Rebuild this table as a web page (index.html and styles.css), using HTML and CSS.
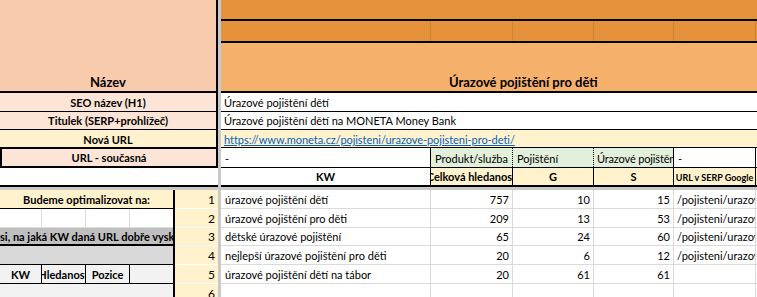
FILE: index.html
```html
<!DOCTYPE html>
<html lang="cs">
<head>
<meta charset="utf-8">
<title>Úrazové pojištění pro děti</title>
<link rel="stylesheet" href="styles.css">
</head>
<body>
<div class="sheet">
  <div class="pane tl">
    <div class="tl-name"><span>Název</span></div>
    <div class="tl-row seo">SEO název (H1)</div>
    <div class="tl-row tit">Titulek (SERP+prohlížeč)</div>
    <div class="tl-row nova">Nová URL</div>
    <div class="tl-row cur">URL - současná</div>
    <div class="tl-row empty"></div>
  </div>

  <div class="pane tr">
    <div class="o1"></div>
    <div class="o2 cols"><div></div><div></div><div></div><div></div><div></div><div></div></div>
    <div class="o3"><span>Úrazové pojištění pro děti</span></div>
    <div class="tr-row seo-v">Úrazové pojištění dětí</div>
    <div class="tr-row tit-v">Úrazové pojištění dětí na MONETA Money Bank</div>
    <div class="tr-row nova-v"><a class="link" href="#">https://www.moneta.cz/pojisteni/urazove-pojisteni-pro-deti/</a></div>
    <div class="cols r4">
      <div class="c">-</div>
      <div class="c green solid">Produkt/služba</div>
      <div class="c green dotted">Pojištění</div>
      <div class="c green dotted tight">Úrazové pojištění</div>
      <div class="c solid">-</div>
      <div class="c solid"></div>
    </div>
    <div class="cols r5">
      <div class="c ctr">KW</div>
      <div class="c ctr yel solid">Celková hledanost</div>
      <div class="c ctr yel solid">G</div>
      <div class="c ctr yel solid">S</div>
      <div class="c ctr yel solid small">URL v SERP Google</div>
      <div class="c yel solid"></div>
    </div>
  </div>

  <div class="pane bl">
    <div class="bl-main">
      <div class="b1">Budeme optimalizovat na:</div>
      <div class="b2"><div></div><div></div><div></div><div></div></div>
      <div class="b3"><span>si, na jaká KW daná URL dobře vyskakuje</span></div>
      <div class="b4"></div>
      <div class="b5"><div class="hc">KW</div><div class="hc">Hledanost</div><div class="hc">Pozice</div><div class="hc"></div></div>
      <div class="b6"></div>
    </div>
    <div class="bl-num">
      <div class="n h19">1</div>
      <div class="n h19">2</div>
      <div class="n h18">3</div>
      <div class="n h19">4</div>
      <div class="n h19">5</div>
      <div class="n h19">6</div>
    </div>
  </div>

  <div class="pane br">
    <div class="cols drow h19"><div class="d kw">úrazové pojištění dětí</div><div class="d num">757</div><div class="d num">10</div><div class="d num">15</div><div class="d url">/pojisteni/urazove-pojisteni-pro-deti/</div><div class="d"></div></div>
    <div class="cols drow h19"><div class="d kw">úrazové pojištění pro děti</div><div class="d num">209</div><div class="d num">13</div><div class="d num">53</div><div class="d url">/pojisteni/urazove-pojisteni-pro-deti/</div><div class="d"></div></div>
    <div class="cols drow h18"><div class="d kw">dětské úrazové pojištění</div><div class="d num">65</div><div class="d num">24</div><div class="d num">60</div><div class="d url">/pojisteni/urazove-pojisteni-pro-deti/</div><div class="d"></div></div>
    <div class="cols drow h19"><div class="d kw">nejlepší úrazové pojištění pro děti</div><div class="d num">20</div><div class="d num">6</div><div class="d num">12</div><div class="d url">/pojisteni/urazove-pojisteni-pro-deti/</div><div class="d"></div></div>
    <div class="cols drow h19"><div class="d kw">úrazové pojištění dětí na tábor</div><div class="d num">20</div><div class="d num">61</div><div class="d num">61</div><div class="d url"></div><div class="d"></div></div>
    <div class="cols drow h19"><div class="d kw"></div><div class="d num"></div><div class="d num"></div><div class="d num"></div><div class="d url"></div><div class="d"></div></div>
  </div>
</div>
</body>
</html>
```

FILE: styles.css
```css
* { box-sizing: border-box; }
html, body { margin: 0; padding: 0; background: #fff; }
body {
  font-family: Lato, "Liberation Sans", sans-serif;
  font-size: 11px;
  color: #000;
  line-height: 1;
}

.sheet {
  display: grid;
  grid-template-columns: 218px 536px;
  grid-template-rows: 187px 107px;
  gap: 3px;
  width: 757px;
  height: 297px;
  background: #c9c9c9;
  overflow: hidden;
}
.pane { background: #fff; overflow: hidden; display: flex; flex-direction: column; }

/* top-left */
.tl-name {
  flex: none; height: 93px;
  background: #f8cbad;
  border-right: 2px solid #000; border-bottom: 2px solid #000;
  display: flex; align-items: flex-end; justify-content: center;
  font-weight: bold; font-size: 13px; padding-bottom: 2px;
}
.tl-row {
  flex: none;
  display: flex; align-items: flex-end; justify-content: center;
  font-weight: bold;
  border-right: 2px solid #000;
  padding-bottom: 3px;
  white-space: nowrap;
}
.seo { height: 19px; background: #fce4d6; border-bottom: 1px solid #000; }
.tit { height: 18px; background: #fce4d6; border-bottom: 1px solid #000; }
.nova { height: 17px; background: #fff2cc; padding-bottom: 2px; }
.cur { height: 21px; background: #fce4d6; border: 2px solid #000; padding-bottom: 3px; }
.empty { height: 19px; background: #fff; border-right: 0; border-bottom: 2px solid #000; }

/* top-right */
.cols { display: grid; grid-template-columns: 209px 82px 81px 80px 82px 80px; flex: none; }
.o1 { flex: none; height: 21px; background: #e5923a; border-bottom: 2px solid #000; }
.o2 { height: 22px; background: #e5923a; border-bottom: 2px solid #000; }
.o2 > div + div { border-left: 1px solid #c98533; }
.o3 {
  flex: none; height: 50px; background: #f5b16b; border-bottom: 2px solid #000;
  display: flex; align-items: flex-end; padding-left: 228px; padding-bottom: 2px;
  font-weight: bold; font-size: 13px; white-space: nowrap;
}
.tr-row {
  flex: none; display: flex; align-items: flex-end;
  padding-left: 3px; padding-bottom: 3px; white-space: nowrap;
}
.seo-v { height: 19px; border-bottom: 1px solid #000; }
.tit-v { height: 18px; border-bottom: 1px solid #000; }
.nova-v { height: 17px; background: #fff2cc; padding-bottom: 2px; }
.link { color: #0563c1; text-decoration: underline; letter-spacing: -0.05px; }

.r4 { height: 21px; border-top: 1px solid #000; border-bottom: 1px solid #000; }
.r5 { height: 19px; border-bottom: 2px solid #000; }
.c {
  display: flex; align-items: flex-end; padding: 0 0 3px 4px;
  white-space: nowrap; overflow: hidden;
}
.c.tight { letter-spacing: -0.15px; padding-left: 3px; }
.r5 .c { font-weight: bold; padding: 0 0 3px 0; }
.ctr { justify-content: center; }
.green { background: #e2efda; }
.yel { background: #fff2cc; }
.solid { border-left: 1px solid #000; }
.dotted { border-left: 1px dotted #000; }
.r5 .small { font-size: 9px; }

/* bottom-left */
.bl { flex-direction: row; }
.bl-main {
  width: 175px; flex: none;
  border-right: 2px solid #000;
  display: flex; flex-direction: column;
}
.b1 {
  flex: none; height: 19px; background: #fff2cc; border-bottom: 1px solid #000;
  display: flex; align-items: flex-end; justify-content: center;
  font-weight: bold; padding-bottom: 3px; white-space: nowrap;
}
.b2 { flex: none; height: 19px; display: grid; grid-template-columns: 42px 44px 44px 1fr; }
.b2 > div { border-right: 1px solid #dcdcdc; border-bottom: 1px solid #dcdcdc; }
.b2 > div:last-child { border-right: 0; }
.b3 {
  flex: none; height: 18px; background: #bfbfbf; border-bottom: 2px solid #000;
  display: flex; align-items: flex-end; padding-bottom: 2px;
  font-weight: bold; white-space: nowrap; overflow: hidden;
}
.b4 { flex: none; height: 19px; background: #d9d9d9; border-bottom: 1px solid #000; }
.b5 { flex: none; height: 19px; display: grid; grid-template-columns: 42px 44px 44px 1fr; border-bottom: 1px solid #000; }
.hc {
  background: #f2f2f2; border-right: 1px solid #000;
  display: flex; align-items: flex-end; justify-content: center;
  padding-bottom: 3px; font-weight: bold; white-space: nowrap; overflow: hidden;
}
.hc:last-child { border-right: 0; }
.b6 { flex: 1; background: #f2f2f2; }

.bl-num { width: 43px; flex: none; display: flex; flex-direction: column; }
.n {
  flex: none; background: #fff2cc; border-bottom: 1px solid #fff;
  display: flex; align-items: flex-end; justify-content: flex-end;
  padding: 0 3px 2px 0; font-size: 12px;
}
.h19 { height: 19px; }
.h18 { height: 18px; }

/* bottom-right */
.drow { border-bottom: 1px solid #dadada; }
.d {
  display: flex; align-items: flex-end; padding-bottom: 3px;
  white-space: nowrap; overflow: hidden;
}
.d + .d { border-left: 1px solid #dadada; }
.kw { padding-left: 4px; }
.num { justify-content: flex-end; padding-right: 3px; }
.url { padding-left: 3px; }
```
